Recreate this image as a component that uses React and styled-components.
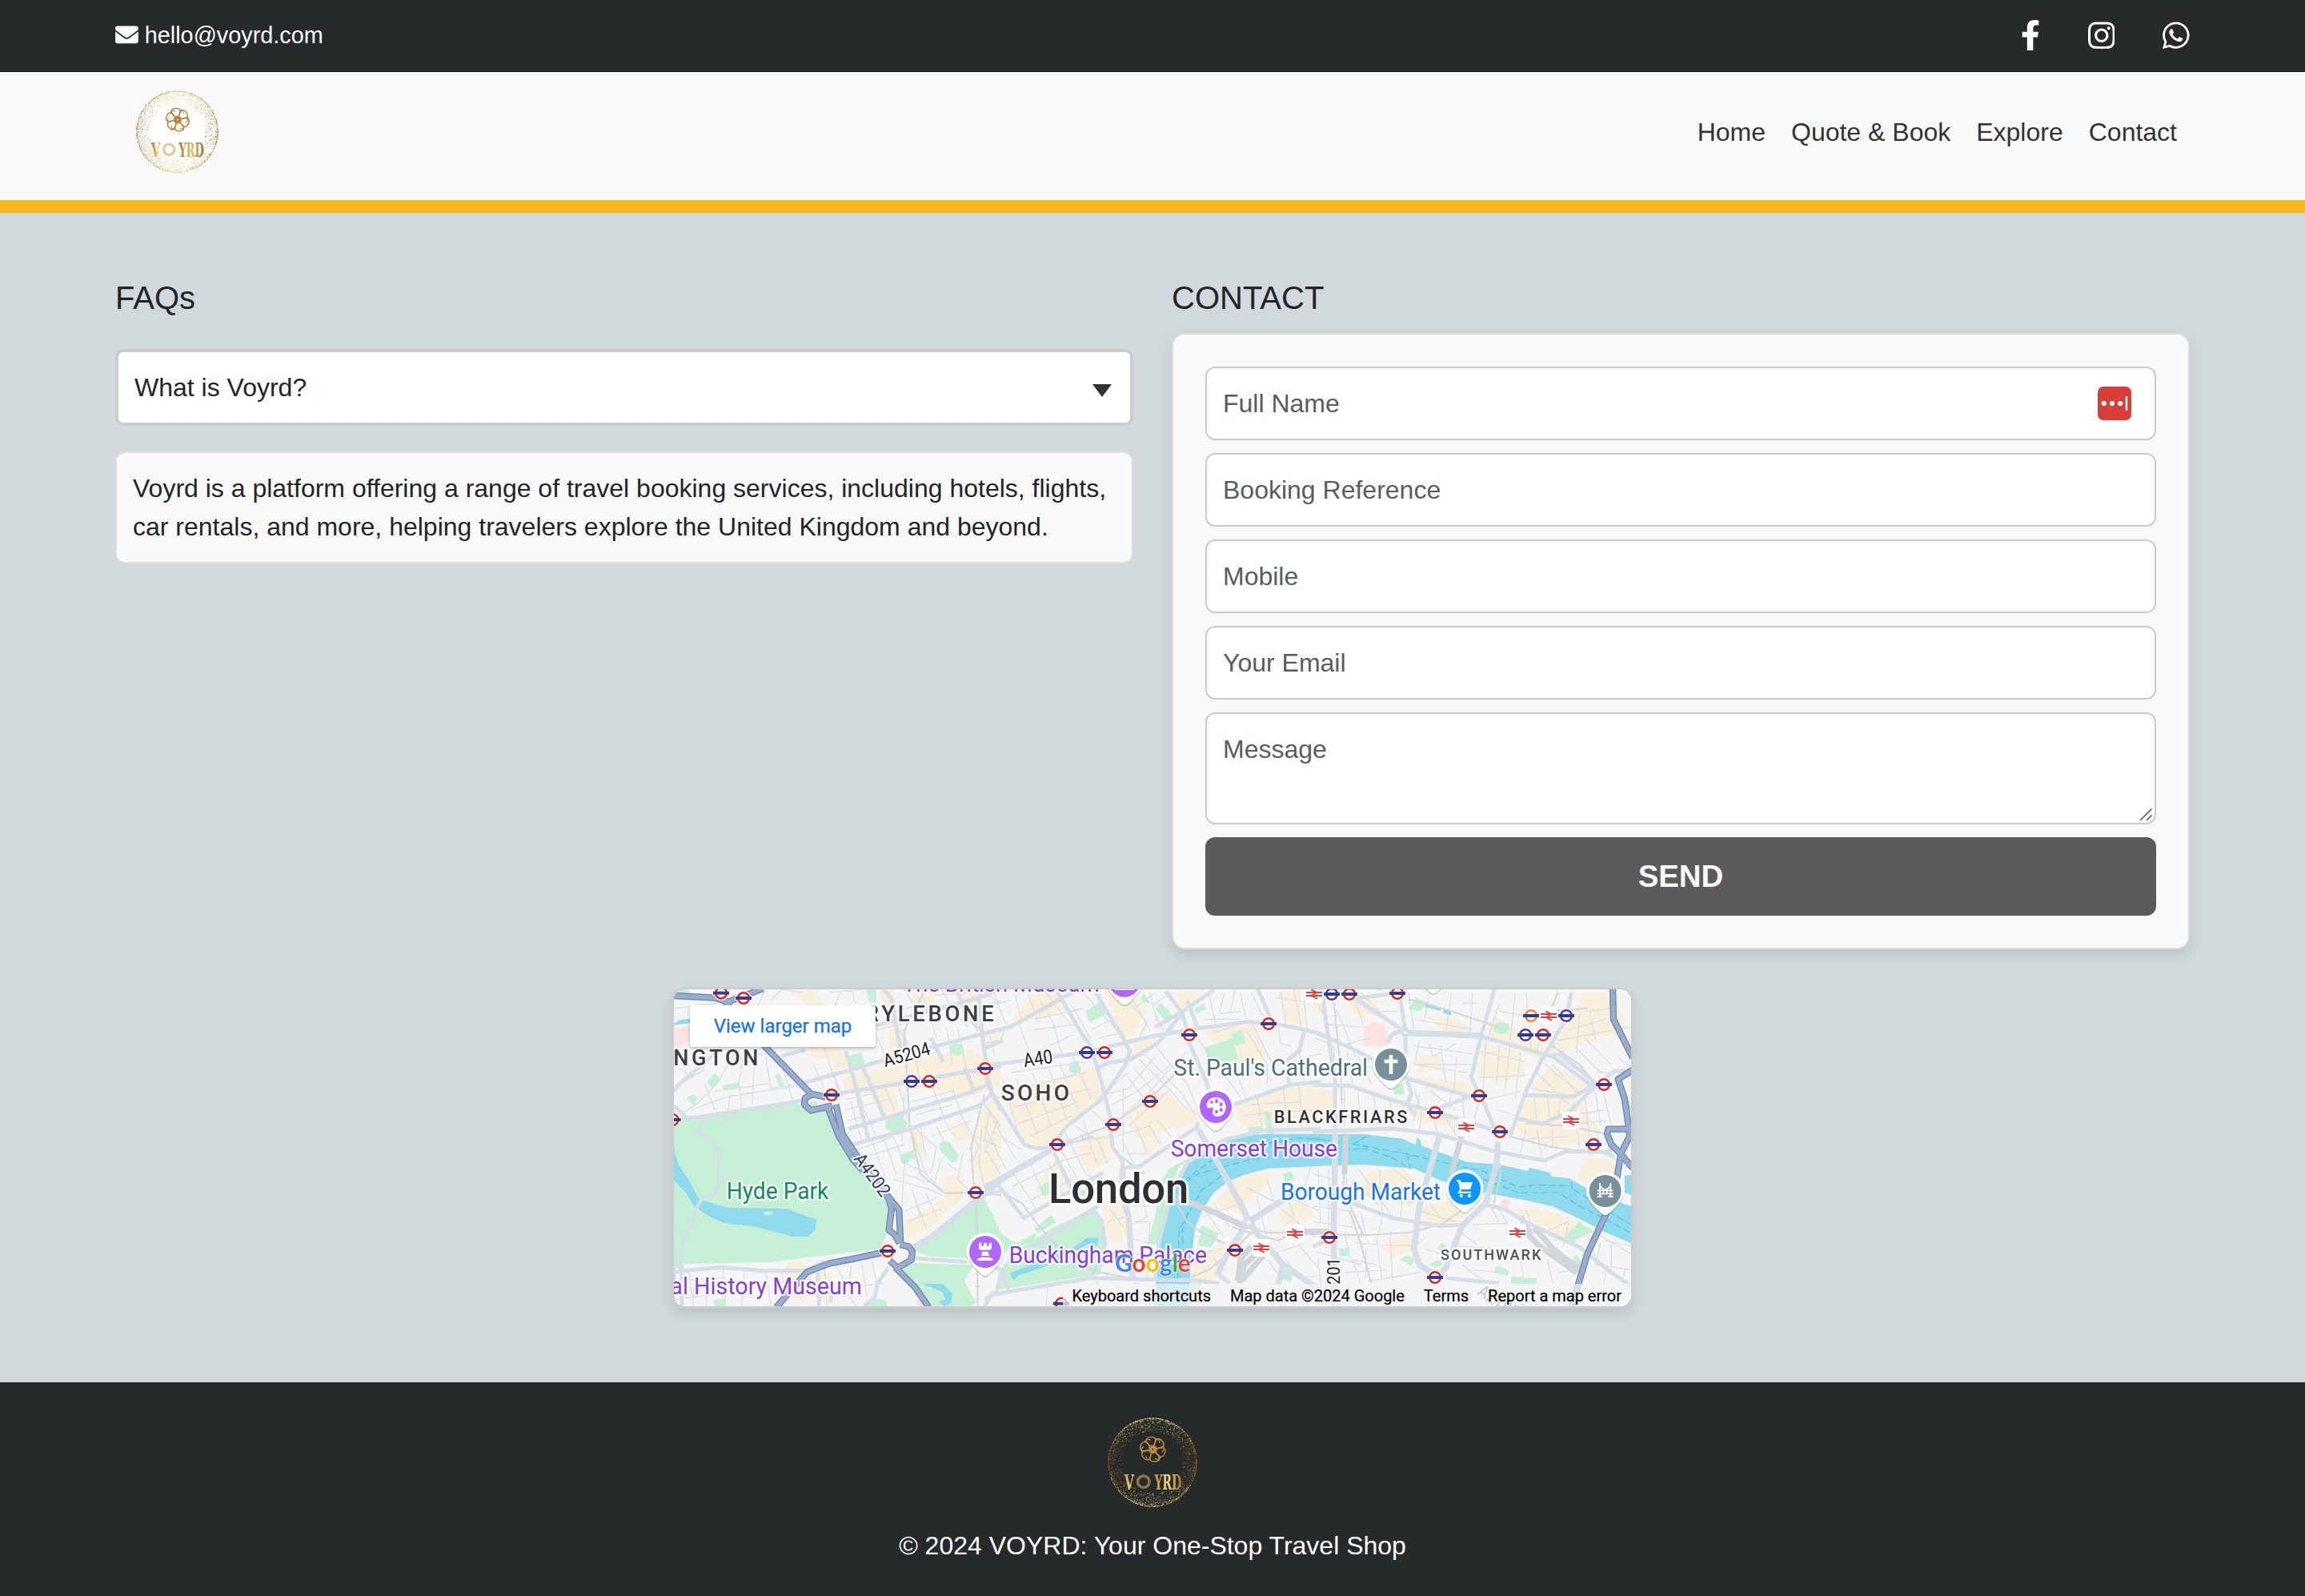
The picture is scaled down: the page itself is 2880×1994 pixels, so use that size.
import React from 'react';
import styled, { createGlobalStyle } from 'styled-components';
import { FaEnvelope, FaFacebookF, FaInstagram, FaWhatsapp } from 'react-icons/fa';

const sans = `"Liberation Sans", Arial, Helvetica, sans-serif`;

const GlobalStyle = createGlobalStyle`
  *, *::before, *::after { box-sizing: border-box; }
  body {
    margin: 0;
    background: #d1d9dc;
    color: #212529;
    font-family: ${sans};
    font-size: 32px;
    line-height: 48px;
  }
  h2, p { margin: 0; }
  a { color: inherit; text-decoration: none; }
`;

const Page = styled.div`
  display: flex;
  flex-direction: column;
  min-height: 1994px;
`;

/* ---------- header ---------- */

const TopBar = styled.div`
  display: flex;
  align-items: flex-start;
  justify-content: space-between;
  height: 90px;
  padding: 20px 144px 0;
  background: #262a2b;
  border-bottom: 1px solid #1b1e20;
  color: #fff;
`;

const EmailLink = styled.a`
  display: flex;
  align-items: center;
  gap: 8px;
  font-size: 28.8px;
  svg { display: block; margin-top: -2px; }
`;

const Socials = styled.div`
  display: flex;
  gap: 60px;
  padding-top: 4.5px;
`;

const SocialLink = styled.a`
  display: block;
  width: ${p => p.$width}px;
  height: 38.4px;
  svg {
    display: block;
    width: 100%;
    height: 100%;
  }
`;

const NavBar = styled.nav`
  display: flex;
  align-items: center;
  justify-content: space-between;
  height: 176px;
  padding: 0 160px 11px;
  background: #f9f9f9;
  border-bottom: 16px solid #f3ba1f;
`;

const NavBrand = styled.a`
  display: block;
  padding-left: 10px;
  svg { display: block; }
`;

const NavLinks = styled.div`
  display: flex;
  gap: 32px;
  color: #333;
`;

/* ---------- main ---------- */

const Main = styled.main`
  flex: 1;
  padding: 82px 144px 0;
`;

const Columns = styled.div`
  display: grid;
  grid-template-columns: 1fr 1fr;
  gap: 48px;
`;

const Column = styled.section`
  display: flex;
  flex-direction: column;
`;

const Title = styled.h2`
  margin-bottom: ${p => p.$gap}px;
  font-size: 40px;
  font-weight: 400;
  line-height: 48px;
`;

const SelectWrap = styled.div`
  position: relative;
  margin-bottom: 32px;
`;

const Select = styled.select`
  display: block;
  width: 100%;
  height: 96px;
  padding: 0 20px;
  appearance: none;
  background: #fff;
  border: 4px solid #ccc;
  border-radius: 10px;
  color: #212529;
  font: 32px ${sans};
`;

const Caret = styled.span`
  position: absolute;
  right: 27px;
  top: 44px;
  border: 12px solid transparent;
  border-top: 16px solid #333;
  border-bottom: 0;
  pointer-events: none;
`;

const Answer = styled.p`
  padding: 20px;
  background: #f9f9f9;
  border: 2px solid #ddd;
  border-radius: 12px;
`;

const Form = styled.form`
  display: flex;
  flex-direction: column;
  gap: 16px;
  padding: 40px;
  background: #f9f9f9;
  border: 2px solid #ddd;
  border-radius: 16px;
  box-shadow: 0 8px 16px rgba(0, 0, 0, 0.1);
`;

const Field = styled.div`
  position: relative;
  display: flex;
`;

const Input = styled.input`
  width: 100%;
  height: ${p => p.$tall ? 140 : 92}px;
  padding: ${p => p.$tall ? '20px' : '0 20px'};
  background: #fff;
  border: 2px solid #ccc;
  border-radius: 12px;
  outline: 0;
  resize: none;
  font: 32px/48px ${sans};
  &::placeholder { color: #595c5f; opacity: 1; }
`;

const AutofillBadge = styled.svg`
  position: absolute;
  right: 31px;
  top: 25px;
`;

const Grip = styled.svg`
  position: absolute;
  right: 3px;
  bottom: 3px;
`;

const Send = styled.button`
  height: 98px;
  padding: 0;
  background: #5a5a5a;
  border: 0;
  border-radius: 12px;
  color: #f9f9f9;
  font: 700 38.4px ${sans};
`;

/* ---------- map ---------- */

const MapFrame = styled.div`
  position: relative;
  width: 1200px;
  height: 400px;
  margin: 48px auto 0;
  overflow: hidden;
  border: 2px solid #ccc;
  border-radius: 16px;
  background: #f5f5f5;
  box-shadow: 0 8px 16px rgba(0, 0, 0, 0.1);
  font-family: Roboto, sans-serif;
`;

const MapDrawing = styled.svg`
  display: block;
  width: 1196px;
  height: 396px;
`;

const LargerMap = styled.a`
  position: absolute;
  left: 20px;
  top: 20px;
  width: 232px;
  height: 52px;
  background: #fff;
  border-radius: 4px;
  box-shadow: 0 2px 4px rgba(0, 0, 0, 0.25);
  color: #1a73e8;
  font-size: 24px;
  line-height: 52px;
  text-align: center;
  -webkit-text-stroke: 0.3px #1a73e8;
`;

const MapCredits = styled.div`
  position: absolute;
  right: 0;
  bottom: 0;
  display: flex;
  gap: 24px;
  height: 28px;
  padding: 0 12px;
  background: rgba(245, 245, 245, 0.7);
  color: #000;
  font-size: 20px;
  line-height: 30px;
  white-space: nowrap;
  -webkit-text-stroke: 0.2px #000;
`;

/* ---------- footer ---------- */

const Footer = styled.footer`
  display: flex;
  flex-direction: column;
  align-items: center;
  gap: 24px;
  height: 267px;
  padding-top: 44px;
  background: #262a2b;
  color: #fff;
  svg { display: block; }
`;

/* ---------- logo ---------- */

function makeSpecks(count) {
  let seed = 7;
  const rnd = () => {
    seed = (seed * 16807) % 2147483647;
    return seed / 2147483647;
  };
  const out = [];
  for (let i = 0; i < count; i++) {
    const a = rnd() * Math.PI * 2;
    const depth = Math.pow(rnd(), 3.2) * 46;
    const r = 153 - depth;
    const vertical = Math.abs(Math.sin(a));
    out.push({
      x: r * Math.cos(a),
      y: r * Math.sin(a),
      s: 0.9 + rnd() * 0.8,
      bright: rnd() < vertical * vertical,
      o: 0.4 + rnd() * 0.5,
    });
  }
  return out;
}

const specks = makeSpecks(2600);

function Logo({ size, id, tones }) {
  const gold = `url(#${id})`;
  const petal = `url(#${id}-petal)`;
  return (
    <svg width={size} height={size} viewBox="-155 -155 310 310">
      <defs>
        <linearGradient id={id} gradientUnits="userSpaceOnUse" x1="-98" y1="0" x2="100" y2="0">
          <stop offset="0" stopColor={tones[0]} />
          <stop offset=".12" stopColor={tones[1]} />
          <stop offset=".3" stopColor={tones[0]} />
          <stop offset=".56" stopColor={tones[0]} />
          <stop offset=".76" stopColor={tones[1]} />
          <stop offset="1" stopColor={tones[2]} />
        </linearGradient>
        <linearGradient id={`${id}-petal`} gradientUnits="userSpaceOnUse" x1="-40" y1="-40" x2="40" y2="40">
          <stop offset="0" stopColor={tones[2]} />
          <stop offset=".45" stopColor={tones[0]} />
          <stop offset=".6" stopColor={tones[1]} />
          <stop offset="1" stopColor={tones[0]} />
        </linearGradient>
      </defs>
      {tones[3] && <circle r="150" fill={tones[3]} />}
      {specks.map((d, i) => (
        <circle key={i} cx={d.x} cy={d.y} r={d.s} opacity={d.o} fill={d.bright ? tones[1] : tones[2]} />
      ))}
      <g transform="translate(1 -45)" fill="none">
        {[-10, 50, 110, 170, 230, 290].map((a, i) => (
          <g key={a} transform={`rotate(${a})`} stroke={i % 2 ? tones[0] : petal}>
            <path d="M-3-4C-8-18-20-26-17-36C-13-46 10-46 15-35C17-26 8-18 3-4" strokeWidth="4" />
            <path d="M15-35C24-33 30-26 27-18" strokeWidth="3" />
            <path d="M0-5L0-15" strokeWidth="7" />
          </g>
        ))}
        <circle r="5" strokeWidth="4" stroke={tones[0]} />
      </g>
      <g
        fontFamily="'DejaVu Serif Condensed', 'DejaVu Serif', serif"
        fontWeight="700"
        fontSize="74"
        fill={gold}
      >
        <text x="-98" y="94" textLength="34" lengthAdjust="spacingAndGlyphs">V</text>
        <text x="6" y="94" textLength="94" lengthAdjust="spacingAndGlyphs">YRD</text>
      </g>
      <circle cx="-31" cy="67" r="20" fill="none" stroke={tones[1]} strokeWidth="10" opacity=".45" />
      <circle cx="-31" cy="67" r="20" fill="none" stroke={tones[2]} strokeWidth="9" strokeDasharray="2 3" opacity=".5" />
    </svg>
  );
}

/* ---------- map drawing ---------- */
/* Three tiles side by side, each with its own origin. Units are a third of a pixel. */

const TILE_X = { west: 0, centre: 1200, east: 2430 };

const beige = {
  west: 'M660 385L840 330 1000 300 1130 270 1260 330 1260 410 1110 460 1060 430 920 420 700 440zM470 60L560 50 600 108 540 108zM805 48L860 48 905 280 850 300 840 200zM640 270L680 290 690 340 640 350 610 290zM530 245L620 240 640 300 560 310zM1040 760L1120 735 1120 830 1000 940 905 990 900 920 1050 830zM1150 610L1200 480 1260 440 1260 740 1180 780zM450 1080L500 1060 560 1110 530 1220 460 1200zM590 1080L640 1150 620 1230 570 1200zM770 430L860 415 880 500 820 520 790 480zM920 560L960 560 970 680 920 640zM1080 560L1140 540 1150 600 1090 620zM1120 48L1180 48 1180 130 1110 90zM930 70L1000 60 1030 120 950 140z',
  centre: 'M450 50L560 80 615 110 560 215 525 230 480 140zM60 420L220 400 420 335 435 440 330 550 230 640 150 620 90 500zM530 530L620 430 700 440 770 520 650 600 570 610zM800 185L1000 180 1060 300 1000 380 900 330 870 250zM940 480L1080 420 1260 410 1260 545 1080 555 960 560zM440 850L515 830 545 900 520 1000 460 990zM860 850L960 750 1080 725 1060 780 970 850 980 900zM780 1040L900 1000 880 1100 860 1150 780 1130zM180 60L280 60 310 120 210 160 100 170zM0 210L60 200 70 240 0 260zM370 600L470 590 480 690 380 730 350 660zM560 250L640 230 600 300 550 310zM700 470L790 500 800 540 720 580zM720 60L820 55 740 125zM1100 60L1180 50 1200 180 1130 170zM590 620L680 600 600 680zM260 690L320 790 250 840 190 800zM1100 880L1200 830 1240 900 1120 940z',
  east: 'M130 90L240 80 240 130 190 160 150 140zM240 420L330 480 600 530 600 575 400 540 230 440zM370 375L590 400 590 440 440 430zM380 300L470 290 490 350 400 360zM790 460L1000 455 1080 580 1020 610 900 640 760 580zM880 300L1040 240 1180 200 1130 60 1010 60 990 120 920 230zM680 150L900 280 850 310 650 225zM420 150L540 160 600 200 500 210zM210 730L340 720 400 780 370 860 170 820zM740 870L900 880 1010 920 960 1000 860 930zM410 860L530 840 580 880 540 930 420 930zM900 330L1020 400 960 500 870 540 810 500 830 400zM640 250L780 280 800 370 720 400 620 380zM0 60L40 60 50 150 0 130zM10 420L80 430 80 490 10 500zM1020 680L1120 690 1140 740 1080 800 990 760zM250 1010L360 960 370 1030 300 1050z',
};

const parks = {
  west: 'M36 540L130 530 500 475 545 510 610 500 650 620 700 690 840 830 838 960 810 1020 400 1070 66 1078 66 1095 36 1095zM160 395L188 364 212 384 180 420zM218 408L280 398 283 415 224 428zM415 372L432 365 450 410 432 417zM82 460L102 440 124 454 110 480zM685 300L740 283 750 328 698 342zM1070 262L1090 248 1118 258 1124 285 1100 297 1075 290zM828 545L850 525 890 518 912 550 905 572 860 586 832 572zM880 668L932 652 946 680 918 686 914 702 892 702zM1030 628L1045 617 1068 620 1103 670 1096 692 1078 697 1035 655zM925 1025L1195 830 1230 890 1262 960 1262 1062 1000 1050zM890 1072L1160 1082 1125 1140 1150 1190 1170 1220 1150 1236 1010 1236 880 1100zM760 1236L790 1205 830 1215 835 1236zM183 1213L225 1205 230 1236 190 1236zM50 50L85 48 100 60 60 64zM755 48L795 48 795 100 775 92zM545 472L575 466 572 486 548 490zM108 1150L132 1150 130 1200 108 1208zM618 1190L634 1195 630 1225 618 1220zM40 48L90 48 80 60 40 64z',
  centre: 'M378 130L430 98 455 142 395 172zM640 120L665 98 702 145 680 168zM585 90L595 60 626 104zM785 125L820 100 832 120 795 140zM822 268L932 230 950 312 880 324 836 306zM922 214L965 200 980 250 942 258zM316 328L350 314 362 352 344 366 320 356zM655 780L690 722 790 668 730 715 700 790 670 950 645 1005 612 1000 640 900zM100 1040L260 940 400 872 425 880 456 1000 436 1115 50 1175 62 1100zM0 830L60 960 100 990 120 1000 70 1040 0 1060zM1050 505L1072 510 1083 590 1058 590zM985 565L1040 560 1044 576 990 582zM800 1008L814 932 880 962 850 1016zM188 945L250 893 268 920 200 962zM118 1000L190 962 200 990 130 1012zM1105 1130L1120 1095 1155 1120 1148 1145zM1117 740L1152 730 1162 760 1130 772zM205 790L240 768 246 815 215 822zM355 800L380 800 378 825 358 825zM290 840L340 830 330 850 296 862zM770 1150L815 1150 810 1180 770 1190zM690 180L706 200 690 205z',
  east: 'M358 122L388 80 432 97 404 130zM676 195Q680 172 710 170 740 176 742 195 720 218 710 218 680 210 676 195zM305 400L340 400 342 442 305 442zM1030 425L1060 392 1075 410 1050 428zM950 970L1000 920 1055 955 985 988 985 1020zM685 1088L710 1088 735 1102 732 1120 685 1112zM745 1124L840 1132 838 1152 745 1152zM328 1060L350 1046 382 1056 370 1085zM100 1018H138V1048H100zM438 1080L470 1060 490 1080 460 1092zM960 1080L990 1040 1030 1110 968 1102zM1060 652L1120 655 1142 690zM465 1020L485 1000 502 1008 490 1030zM235 48L265 48 258 54z',
};

const water = {
  west: 'M36 628L40 660 50 700 90 760 130 835 235 866 455 870 570 910 568 945 540 975 485 975 330 935 225 925 170 900 128 872 110 860 80 810 36 765zM965 1152L1045 1152 1080 1190 1075 1225 1050 1236 1028 1218 1055 1210 1045 1185 1000 1165zM36 176L60 162 100 158 100 174 36 182z',
  centre: 'M638 1236L645 1110 660 960 685 880 720 780 760 705 850 645 960 597 1060 590 1262 590 1262 710 1060 720 970 745 910 770 860 810 820 870 790 940 775 1060 765 1236zM95 1112L130 1098 330 1020 380 982 424 978 428 992 420 1012 396 1000 300 1050 210 1095 130 1120 108 1140z',
  east: 'M0 590L200 592 335 608 385 630 392 604 406 616 408 635 480 660 580 695 700 705 806 728 812 716 890 735 896 750 960 755 1020 790 1100 830 1200 862 1200 1002 1100 960 1000 908 900 862 780 835 640 810 560 790 480 765 380 720 200 706 0 710zM425 98L480 116 478 128 422 114zM490 120L520 130 518 146 490 136zM1170 745L1200 745 1200 822 1170 810z',
};

const pink = {
  west: 'M36 192L96 184 96 240 50 265 36 260zM940 1215L965 1215 985 1236 950 1236z',
  centre: 'M780 1190L830 1165 840 1236 790 1236z',
  east: 'M186 260L195 200 220 168 268 180 285 230 280 262zM705 838L742 828 732 872 705 860z',
};

const minor = {
  west: 'M36 120L200 100M60 200L230 215M110 240L150 350 60 400M130 210L90 260M36 330L110 380M260 290L200 400 130 470 60 520M300 270L280 400 290 495M230 320L420 280M150 400L190 500M340 290L330 480M380 300L400 420 520 400M190 430L400 400M100 500L240 450 500 410M430 300L480 460M245 440L240 510M430 110L460 200 560 170 560 110M380 48L350 110M400 90L440 48 520 60M620 60L740 48M640 110L660 60M700 48L720 110M800 200L960 160M760 70L780 110M840 140L940 110M960 48L1000 160 1020 230M860 170L920 260M900 48L950 130 1060 110M1040 48L1080 130 1140 190M1010 70L1150 60M1130 50L1190 110 1260 90M1100 190L1130 340M1060 200L1080 330M940 300L960 400M800 230L830 310M600 270L650 420M560 330L600 420M640 370L660 440M720 400L750 500 800 610M780 400L800 470M830 420L870 520M680 460L780 440M680 500L840 460M690 540L760 520M700 470L740 620M880 420L940 620 980 740 1040 800M900 440L890 620M930 470L1080 430M940 520L1080 480M960 560L980 680M1000 400L1060 560 1090 600M1080 420L1130 560M720 650L860 600M740 680L900 630M820 600L870 740M860 600L900 700 890 860M780 620L830 760M900 700L990 740M900 740L980 770M860 760L1000 800 1040 820M930 560L1020 640 1000 740M1020 560L1060 640M1000 600L1150 540M1100 500L1180 640 1150 700M1120 660L1100 760 1140 800M1040 680L1010 780M1060 700L1100 730M930 800L960 900M900 880L1020 830M910 920L1040 870M940 830L980 940M980 810L1020 900M1200 480L1260 560M1170 600L1260 640M1190 560L1180 700 1200 790M1220 500L1200 620M36 1140L220 1130M90 1100L110 1236M220 1095L230 1236M300 1100L290 1236M380 1110L400 1236M36 1210L200 1190M150 1140L160 1236M440 1110L450 1180M600 1090L610 1236M540 1130L590 1236M700 1080L690 1200 720 1236M640 1080L680 1150M640 1170L820 1150M740 1075L760 1200M560 1180L680 1200M780 1070L800 1170M150 545L300 535 420 508 520 505',
  centre: 'M0 110L100 90M30 48L80 180M110 48L140 170M160 50L200 170M0 60L60 100M40 300L20 220M80 190L60 240 0 250M210 90L260 180 290 290M190 160L370 120M230 60L330 190M130 180L180 310M180 200L350 180M340 60L370 60 520 230M330 110L400 240M430 60L480 180M240 260L330 220M400 200L500 150M430 230L520 210M470 250L480 320M580 230L610 170 540 100M560 120L640 60M540 60L620 200M630 110L700 60M650 180L620 60M670 200L640 140M100 360L380 320M70 390L130 600M120 380L200 600M180 360L250 560M240 340L310 540M280 320L350 500M330 300L400 460M80 430L380 360M110 490L400 420M130 550L350 470M170 600L330 520M40 460L110 420M0 480L120 690M30 580L140 650M0 560L80 720M0 640L60 740M50 540L0 660M420 460L540 360M460 440L540 420 640 300M480 480L560 440 700 330M500 540L620 430 760 280M540 560L700 420M580 310L700 430 760 500M600 290L740 440 790 520M640 260L760 400 800 500M560 340L640 440M540 380L600 460M520 420L520 660M490 600L620 560M520 620L560 700M570 560L610 660M620 560L660 630M650 540L700 600M530 665L620 665M400 500L470 560M340 560L430 620 460 700M300 580L380 740M340 620L470 600M280 640L350 760M370 540L420 700M260 700L400 660M70 770L170 700 230 830M110 740L200 880M100 790L280 700M170 840L330 760M240 700L310 850M380 740L480 800M820 160L960 160M840 60L870 190M900 60L880 140 960 130M940 50L920 140M960 60L980 160M1000 60L1060 180M860 210L960 180M980 200L1060 330 1060 400M1000 170L1100 370M800 230L870 330 960 450M880 340L980 310 1080 390M870 380L1060 350M940 350L980 450M1100 180L1110 250 1150 260M1110 60L1130 180M1160 50L1190 200M1090 80L1240 100M1200 100L1210 210M1150 320L1260 290M1180 280L1200 400M1020 440L1040 560M1120 420L1140 570M1180 410L1190 570M1000 480L1180 470M970 520L1240 500M560 740L640 800M570 760L610 900 560 930M540 800L620 780M550 860L640 860M560 920L620 920 610 1130M540 980L620 1000M470 870L520 940M460 920L530 900M560 1040L620 1050M1020 820L1060 990M980 790L1100 850M1060 760L1090 860M1120 780L1160 900M1200 790L1230 690 1260 640M1100 860L1240 980M1140 830L1260 880M820 900L960 850M860 850L920 940M830 880L900 980M780 970L900 1000M800 1040L890 1020M860 1050L880 1100M1080 1040L1200 1000M1130 1060L1180 1130 1260 1120M1060 1060L1120 1140M1180 1010L1250 1090M900 1160L1000 1170 1090 1150M240 1140L230 1236M340 1140L320 1236M420 1140L430 1236M560 1150L640 1160',
  east: 'M0 60L50 160M60 60L130 60 240 150M90 120L160 300M150 60L190 180M60 180L200 190M10 230L80 260 80 390M100 260L220 230M130 280L150 400M100 340L230 340M170 300L220 400M180 60L250 130 320 130M360 60L380 200M380 160L600 200M440 60L420 160M520 60L500 210M560 100L620 100M600 60L590 220M380 260L600 290M400 240L380 330 580 360M440 250L450 300 540 250M480 260L500 400M540 300L530 430M380 330L620 330M400 380L430 420M380 420L400 480M440 430L540 500M520 420L510 500M560 440L570 540M400 440L380 540M230 440L240 560M290 460L300 560M170 430L180 560M120 420L120 560M340 480L340 560M410 500L400 580M450 520L470 590M500 530L540 600M620 480L600 560M660 460L780 430M630 280L800 320M650 230L640 420M700 250L690 400M740 260L720 430M780 280L760 460M620 380L800 370M690 500L760 520M700 100L660 220M760 60L740 240M800 60L820 280M700 130L880 160M860 180L840 290M960 200L1100 160M920 240L1130 200M1000 140L990 290M1040 130L1060 240M1020 130L1120 120M920 300L1020 370M980 260L1080 360 1120 360M1020 230L1120 330M900 330L1000 440M840 360L960 480M860 320L980 420M820 420L940 440M830 450L840 540M880 450L890 540M930 460L920 530M980 470L1000 640M1020 440L1040 620M1060 430L1080 560M960 520L1100 500M900 560L1100 540M800 570L780 660M840 570L860 680M900 570L900 640M1090 430L1120 560M780 610L960 600M1130 200L1194 190M1140 300L1194 340M0 740L80 760M0 800L130 790 180 850M20 720L30 930M60 720L60 950M120 720L140 850M0 860L150 880M150 760L250 860M170 720L300 900M250 720L260 880M300 720L400 800M200 790L380 850M340 780L330 900M0 920L160 940M180 880L200 970M260 900L250 960M400 880L540 920M440 850L500 930M420 980L380 1010M160 1000L380 1010M10 1030L180 1080M120 960L140 1060 240 1080M20 1060L40 1236M150 1060L180 1150M240 980L260 1140M290 970L300 1140M200 1020L200 1130M120 1110L280 1100M220 1140L400 1110M420 1020L480 1040M600 930L720 925 780 950M560 960L620 1010M540 1010L680 1020M700 1030L850 1060M560 1080L640 1140M600 1100L720 1110M660 850L700 920M700 870L730 930M800 880L820 930M860 960L960 920M900 990L1000 970M940 1010L960 920M1020 940L1060 1050M1060 960L1194 1040M1080 1000L1060 1080 1194 1100M1100 990L1194 1010M1120 1000L1120 1090M880 1060L900 1150M780 1060L790 1130M920 1110L1000 1100M1100 1110L1090 1160M1170 1100L1160 1160',
};

const major = {
  west: 'M36 535L130 527 300 500 520 465M640 440L860 405 1050 372 1205 345 1262 336M440 298L530 275M500 405L700 350 830 312 1262 196M680 280L702 350 765 612M745 340L825 530M1180 48L1190 200 1208 340M700 632L910 575 1180 485 1228 440M690 572L900 508 1130 440 1215 405M935 1055L1135 1070M36 1107L210 1090 370 1103 530 1103 600 1068M36 485L85 530M36 430L60 400 210 272M820 48L850 80 890 300M770 190L1180 80 1262 48M1000 230L1045 320M1205 345L1215 410 1262 500M1095 48L1130 140 1180 200M1125 340L1150 400 1160 440M840 1090L800 1150 790 1200 750 1236M1236 1180L1200 1236M36 1095L36 1236M66 1080L66 1236M575 1110L580 1236',
  centre: 'M0 345L30 440 150 630 195 645 250 640M260 660L290 720 330 800M50 780L148 905 445 735M250 640L310 560 440 460 530 330 545 280 520 230 415 60M20 332L380 285 560 240 640 222 800 195 980 170 1080 175 1200 200 1262 215M380 230L405 280 440 400 470 520 480 640 518 690 518 740M275 60L380 240M0 215L100 187 330 60M425 345L460 325 550 310 650 250 740 140M510 718L580 712 700 630 795 565 800 545M760 230L830 390 855 470M680 55L740 135 770 235M640 190L745 130 860 50M760 90L800 195M935 480L1150 405 1262 395M1198 205L1180 280 1140 310 1140 400M640 1130L655 990 705 800 765 690 900 612 1050 577 1262 572M40 1190L400 1130 800 1140 880 1152M100 1060L430 858M1025 48L1080 175M400 870L440 915 452 1000 430 1085M62 1100L92 1180M0 1210L45 1185 65 1100 0 1080M880 1120L920 1150M0 270L70 240',
  east: 'M0 205L130 262 245 320M35 50L55 200 85 400 85 590M340 215L620 222 900 300 1040 405M285 250Q285 208 345 205M325 60L347 200 350 370 370 440 355 480M0 405L140 410 270 455 400 490 480 515 700 582M330 375L580 447 624 447M470 495L600 447M682 48L630 230 595 380 645 480 690 590M970 60L950 160 860 310 800 430 740 600M800 445L980 450 1060 402M760 530L860 552 960 510 1040 430 1130 355 1194 350M0 582L300 570 470 590 680 655 870 690 950 655 1100 658 1140 640M150 850L300 905 480 935 565 930M650 855L720 872 800 920 1000 1015 1120 1110 1194 1160M500 1130L700 1150M900 295L930 290 1060 400M0 1012L65 985M350 210L160 80M355 480L385 520M1150 420L1194 500M170 80L340 60',
};

const wide = {
  west: 'M925 1020L1000 978 1170 840 1262 765',
  centre: 'M0 790L60 760 250 650M518 720L515 800 540 900 556 1140M800 570L870 690 975 880 990 920M990 920L1100 850 1190 795M990 920L1060 1010 1120 1080 1262 1180M985 925L910 1040 872 1120M1120 1080L1100 1160',
  east: 'M85 590L80 930 80 1236M475 600L400 860 380 1020 400 1080 460 1122M695 620L690 700 650 850 560 935 500 1090 470 1130M345 210L630 222',
};

const rail = {
  west: 'M1170 800L1175 1236M900 200L920 560 960 740 1050 812 1170 810M1160 780L1150 640 1200 440M1040 375L1205 350M1170 812L1262 820M980 48L900 200 900 300',
  centre: 'M0 815L60 805 140 850 200 930 330 1080 440 1110 540 1130M280 630L480 555 640 440 720 360M280 635L410 600M940 930L1060 960 1262 960M1000 960L940 1020 840 1100 740 1140M720 850L760 920 800 950 900 1000M930 940L1100 990 1160 960M430 1060L400 1130M520 680L600 740',
  east: 'M80 100L105 350 110 480M125 590L115 800 190 970 360 960 480 930 600 850M140 880L180 1000 220 1150M0 965L190 970M360 85L520 130 700 190M740 600L900 640 1050 660M690 620L705 740 680 850M920 60L890 130 1030 120M900 260L1000 330 1060 400M800 550L960 560 1100 590',
};

const railWide = {
  west: '',
  centre: 'M720 830L830 870 940 920 980 940M955 1150L975 1080 1040 1020M965 1140L1050 1040M1200 957H1262M950 1140L960 1060 1000 1010',
  east: 'M125 590L120 740M558 600L520 740M800 960L850 1010 990 1110M830 940L900 1020 1010 1105M0 957H60M780 900L820 970',
};

const blue = {
  west: 'M36 72L190 80 240 95 370 45M215 80L380 265 550 440 605 452M630 484L550 502 525 480 528 455 560 440M613 492L655 600 710 690 840 830 852 870 842 950 865 970 882 1000M643 480L668 590 700 640 770 740 880 875 886 1000M884 1005L915 1012 930 1030 926 1062 875 1092 845 1065M866 1090L940 1165 992 1240M840 1030L700 1060 620 1075 535 1108 480 1170 420 1240',
  centre: '',
  east: 'M1125 45L1128 160 1200 305M1200 350L1145 385 1170 460 1186 572 1108 572 1104 590 1120 630 1155 665 1188 600 1186 560M1155 665L1200 718M1155 670L1142 750 1100 890 1030 1040 1003 1130 972 1240',
};

const ferry = {
  west: '',
  centre: 'M750 765L850 690 980 640 1180 605 1262 612M755 770L800 740 1000 685 1262 660M725 1130L730 950 780 860 815 800 900 740M745 1000L740 960 765 880',
  east: 'M0 605L160 630 330 660 460 690 640 730 770 790 840 780 960 785M0 670L110 650 200 645 300 680 365 720 355 660M150 630L200 600M640 760L770 810 920 810 1000 860 1080 900 1200 965M970 770L975 810M980 800L1200 935',
};

const tiles = ['west', 'centre', 'east'];

function Layer({ data, ...rest }) {
  return (
    <g fill="none" strokeLinejoin="round" {...rest}>
      {tiles.map(t => data[t] && (
        <g key={t} transform={`translate(${TILE_X[t]} 0)`}><path d={data[t]} /></g>
      ))}
    </g>
  );
}

const RED = '#e3211c';
const PURPLE = '#5f30a5';
const ORANGE = '#fb8020';

const tubeStops = [
  [213, 62], [297, 81], [627, 444], [927, 393, PURPLE], [993, 393], [1203, 345], [32, 537], [1167, 810], [837, 1029],
  [1584, 285, PURPLE], [1650, 285], [1968, 219], [2265, 177], [1821, 468], [1683, 555], [1473, 630], [2139, 1026], [1488, 1226],
  [2502, 66, PURPLE], [2568, 66], [2748, 63], [3249, 147, ORANGE], [3381, 147, PURPLE], [3228, 219, PURPLE], [3294, 219],
  [3054, 447], [2889, 510], [3132, 582], [3522, 405], [3483, 630], [2493, 978], [2889, 1128],
];

const railStops = [[2436, 66], [3315, 147], [3006, 564], [3399, 540], [3198, 960], [2364, 963], [2238, 1017]];

function TubeStop({ x, y, color = RED }) {
  return (
    <g transform={`translate(${x} ${y})`}>
      <circle r="28" fill="#fff" />
      <rect x="-33" y="-9" width="66" height="18" fill="#fff" />
      <circle r="20.5" fill="#fff" stroke={color} strokeWidth="7.5" />
      <rect x="-30" y="-6" width="60" height="12" fill={color === RED ? '#373b91' : '#20409a'} />
    </g>
  );
}

function RailStop({ x, y }) {
  return (
    <g transform={`translate(${x} ${y})`}>
      <rect x="-33" y="-33" width="66" height="66" rx="12" fill="#fff" />
      <path d="M-30-6H30M-30 6H30M-11-17L10-6-10 6 12 18" fill="none" stroke="#e23f3d" strokeWidth="5.5" />
    </g>
  );
}

function Pin({ x, y, color, children }) {
  const body = 'M-71 0A71 71 0 1 1 71 0C71 30 48 50 28 72L12 86Q0 95-12 86L-28 72C-48 50-71 30-71 0Z';
  return (
    <g transform={`translate(${x} ${y})`}>
      <path d={body} transform="translate(0 4)" fill="#000" opacity=".25" />
      <path d={body} fill="#fff" />
      <circle r="60" fill={color} />
      {children}
    </g>
  );
}

function Label({ x, y, w, size, color, weight = 400, turn = 0, children, ...rest }) {
  return (
    <text
      transform={`translate(${x} ${y}) rotate(${turn})`}
      textLength={w}
      lengthAdjust={weight === 500 ? 'spacing' : 'spacingAndGlyphs'}
      fontSize={size}
      fontWeight={weight}
      fill={color}
      stroke="#fff"
      strokeOpacity=".85"
      strokeWidth="14"
      strokeLinejoin="round"
      paintOrder="stroke"
      {...rest}
    >
      {children}
    </text>
  );
}

function LondonMap() {
  return (
    <MapDrawing viewBox="36 48 3588 1188">
      <rect x="36" y="48" width="3588" height="1188" fill="#f5f5f5" />
      <Layer data={beige} fill="#f8efdd" />
      <Layer data={pink} fill="#fde4e3" />
      <Layer data={parks} fill="#c5f0d6" />
      <Layer data={minor} stroke="#d8e0e7" strokeWidth="4" />
      <Layer data={water} fill="#90daee" />
      <path d="M368 884L385 880 405 880 403 892 385 896z" fill="#c5f0d6" />
      <Layer data={ferry} stroke="#4fc3de" strokeWidth="3.5" strokeDasharray="26 12" />
      <Layer data={rail} stroke="#d3d7dc" strokeWidth="6" />
      <Layer data={rail} stroke="#d3d7dc" strokeWidth="16" strokeDasharray="3 42" />
      <Layer data={railWide} stroke="#d2d5da" strokeWidth="22" />
      <Layer data={major} stroke="#d6dfe7" strokeWidth="15" />
      <Layer data={wide} stroke="#d6dfe7" strokeWidth="23" />
      <path
        d="M145 540L125 575 190 630 203 680 205 780 178 825 145 825 115 880 110 905 70 990 58 1080 62 1100"
        fill="none" stroke="#d6dfe7" strokeWidth="13" strokeLinejoin="round"
      />
      <circle cx="2190" cy="922" r="24" fill="#d6dfe7" />
      <circle cx="2190" cy="922" r="7" fill="#fff" />
      <circle cx="2777" cy="210" r="18" fill="#d6dfe7" />
      <circle cx="2777" cy="210" r="6" fill="#fff" />
      <Layer data={blue} stroke="#6c87b4" strokeWidth="25" />
      <Layer data={blue} stroke="#9aaecc" strokeWidth="17" />

      {tubeStops.map(([x, y, color]) => <TubeStop key={`${x}-${y}`} x={x} y={y} color={color} />)}
      {railStops.map(([x, y]) => <RailStop key={`${x}-${y}`} x={x} y={y} />)}

      <Label x={893} y={58} w={738} size={86} color="#8440d6">The British Museum</Label>
      <Label x={603} y={167} w={632} size={82} color="#3c4043" weight={500}>MARYLEBONE</Label>
      <Label x={0} y={332} w={352} size={81} color="#3c4043" weight={500}>INGTON</Label>
      <Label x={828} y={340} w={180} size={68} color="#202124" turn={-16}>A5204</Label>
      <Label x={1350} y={340} w={110} size={72} color="#202124" turn={-9}>A40</Label>
      <Label x={708} y={684} w={180} size={68} color="#2c3b57" turn={54}>A4202</Label>
      <Label x={2532} y={1154} w={100} size={66} color="#202124" turn={-90}>201</Label>
      <Label x={1262} y={464} w={256} size={84} color="#3c4043" weight={500}>SOHO</Label>
      <Label x={2285} y={548} w={500} size={65} color="#303134" weight={500}>BLACKFRIARS</Label>
      <Label x={2910} y={1062} w={376} size={54} color="#4d5156" weight={500}>SOUTHWARK</Label>
      <Label x={233} y={833} w={383} size={86} color="#188760">Hyde Park</Label>
      <Label x={741} y={1190} size={86} color="#8440d6" textAnchor="end">Natural History Museum</Label>
      <Label x={1909} y={371} w={728} size={86} color="#4f6f7d">St. Paul's Cathedral</Label>
      <Label x={1898} y={674} w={625} size={86} color="#8440d6">Somerset House</Label>
      <Label x={2310} y={836} w={600} size={86} color="#1a73e8">Borough Market</Label>
      <Label x={1292} y={1074} w={742} size={86} color="#8440d6">Buckingham Palace</Label>
      <Label x={1440} y={850} w={526} size={158} color="#2d2f33" weight={500} strokeWidth="18">London</Label>
      <Label x={3044} y={1190} w={170} size={66} color="#5f6368" turn={33}>A2198</Label>

      <Pin x={1725} y={17} color="#b266ff"><path d="M-36 20H36V34H-36z" fill="#fff" /></Pin>
      <Pin x={2883} y={-26} color="#b266ff" />
      <Pin x={1203} y={1032} color="#b266ff">
        <path d="M-24-34H-14V-22H-6V-34H6V-22H14V-34H24V-12L18-7H-18L-24-12zM-11-1H11L15 15H-15zM-15 20H15L29 26V33H-29V26z" fill="#fff" />
      </Pin>
      <Pin x={2067} y={489} color="#b266ff">
        <path d="M0-36C22-36 38-20 38 0S24 36 8 36C-4 36-12 28-12 20C-12 14-8 10-10 4C-12-1-17 4-24 4C-32 4-34-2-34-6C-34-24-18-36 0-36Z" fill="#fff" />
        <g fill="#b266ff">
          <ellipse cx="-15" cy="-18" rx="5.5" ry="6" /><ellipse cx="3" cy="-22" rx="6" ry="8" />
          <ellipse cx="20" cy="-10" rx="6" ry="8" /><ellipse cx="20" cy="11" rx="6" ry="7" />
          <ellipse cx="3" cy="18" rx="6" ry="7" />
        </g>
      </Pin>
      <Pin x={2724} y={330} color="#78909c">
        <path d="M-7-36H7V-19H25V-5H7V36H-7V-5H-25V-19H-7z" fill="#fff" />
      </Pin>
      <Pin x={3000} y={795} color="#0d96ff">
        <path d="M-30-33H-17L-13-24H30L21 3H-12L-15 11H23V18H-26L-18 3-24-26H-30z" fill="#fff" />
        <circle cx="-13" cy="27" r="6" fill="#fff" /><circle cx="18" cy="27" r="6" fill="#fff" />
      </Pin>
      <Pin x={3527} y={804} color="#78909c">
        <path d="M-20-30V20M20-30V20M-30 10H30M-30-2H30M-20-20Q0 10 20-20M-7-12V10M7-12V10M-30 21H-11M11 21H30" fill="none" stroke="#fff" strokeWidth="5.5" />
      </Pin>

      <text
        x="1689" y="1108" textLength="284" lengthAdjust="spacingAndGlyphs"
        fontFamily="Lato, sans-serif" fontSize="94" fontWeight="700"
        stroke="#fff" strokeWidth="5" paintOrder="stroke"
      >
        <tspan fill="#4285f4">G</tspan><tspan fill="#ea4335">o</tspan><tspan fill="#fbbc04">o</tspan><tspan fill="#4285f4">g</tspan><tspan fill="#34a853">l</tspan><tspan fill="#ea4335">e</tspan>
      </text>
    </MapDrawing>
  );
}

const fields = ['Full Name', 'Booking Reference', 'Mobile', 'Your Email'];

export default function App() {
  return (
    <Page>
      <GlobalStyle />
      <TopBar>
        <EmailLink href="#"><FaEnvelope size={28.8} />hello@voyrd.com</EmailLink>
        <Socials>
          <SocialLink href="#" $width={24}><FaFacebookF /></SocialLink>
          <SocialLink href="#" $width={33.6}><FaInstagram /></SocialLink>
          <SocialLink href="#" $width={33.6}><FaWhatsapp /></SocialLink>
        </Socials>
      </TopBar>
      <NavBar>
        <NavBrand href="#"><Logo size={103} id="gold-light" tones={['#b07f2e', '#dfc665', '#9c6a2e', '#fdfdfd']} /></NavBrand>
        <NavLinks>
          <a href="#">Home</a>
          <a href="#">Quote &amp; Book</a>
          <a href="#">Explore</a>
          <a href="#">Contact</a>
        </NavLinks>
      </NavBar>

      <Main>
        <Columns>
          <Column>
            <Title $gap={40}>FAQs</Title>
            <SelectWrap>
              <Select defaultValue="what"><option value="what">What is Voyrd?</option></Select>
              <Caret />
            </SelectWrap>
            <Answer>
              Voyrd is a platform offering a range of travel booking services, including hotels, flights,
              car rentals, and more, helping travelers explore the United Kingdom and beyond.
            </Answer>
          </Column>
          <Column>
            <Title $gap={20}>CONTACT</Title>
            <Form>
              {fields.map((name, i) => (
                <Field key={name}>
                  <Input placeholder={name} />
                  {i === 0 && (
                    <AutofillBadge width="42" height="42" viewBox="0 0 42 42">
                      <rect width="42" height="42" rx="7" fill="#d83d39" />
                      <g fill="#fff">
                        <circle cx="7.8" cy="21" r="3.1" /><circle cx="18" cy="21" r="3.1" /><circle cx="28.2" cy="21" r="3.1" />
                        <rect x="34.8" y="12" width="2.4" height="18" rx="1" />
                      </g>
                    </AutofillBadge>
                  )}
                </Field>
              ))}
              <Field>
                <Input as="textarea" $tall placeholder="Message" />
                <Grip width="18" height="18" viewBox="0 0 18 18">
                  <path d="M1.5 15.5L15 2M9.5 15.5L15 10" stroke="#555" strokeWidth="1.6" strokeLinecap="round" />
                </Grip>
              </Field>
              <Send type="button">SEND</Send>
            </Form>
          </Column>
        </Columns>

        <MapFrame>
          <LondonMap />
          <LargerMap href="#">View larger map</LargerMap>
          <MapCredits>
            <span>Keyboard shortcuts</span>
            <span>Map data ©2024 Google</span>
            <span>Terms</span>
            <span>Report a map error</span>
          </MapCredits>
        </MapFrame>
      </Main>

      <Footer>
        <Logo size={112} id="gold-dark" tones={['#c2903c', '#f0dc8a', '#a36c25', null]} />
        <p>© 2024 VOYRD: Your One-Stop Travel Shop</p>
      </Footer>
    </Page>
  );
}
